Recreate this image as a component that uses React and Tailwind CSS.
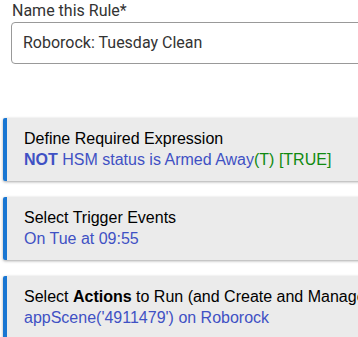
import React from 'react'

const Card = ({ title, children }) => (
  <div className="flex bg-[#ebebeb] shadow-[0_1px_3px_rgba(0,0,0,0.35)] rounded-l-[2px]">
    <div className="w-[4px] shrink-0 bg-[#1976d2] rounded-l-[2px]" />
    <div className="pl-[17px] pt-[10px] pb-[11px] text-[16px] leading-[21px] font-['Liberation_Sans',Arial,sans-serif] whitespace-nowrap">
      <div className="text-black">{title}</div>
      <div className="text-[#3f51c4]">{children}</div>
    </div>
  </div>
)

export default function App() {
  return (
    <div className="w-[358px] h-[337px] overflow-hidden bg-white">
      <div className="w-[440px]">
        <div className="pl-[11px] pt-[1px]">
          <div className="pl-[1px] text-[16px] leading-[20px] text-[#333] font-['Roboto',sans-serif]">
            Name this Rule*
          </div>
          <div className="mt-[1px] h-[42px] flex items-center pl-[11px] border border-[#999] rounded-[4px] text-[16px] text-[#333] font-['Roboto',sans-serif]">
            Roborock: Tuesday Clean
          </div>
        </div>

        <div className="pl-[3px] pt-[54px] flex flex-col gap-[16px]">
          <Card title="Define Required Expression">
            <span className="font-bold">NOT</span> HSM status is Armed Away
            <span className="text-[#108a10]">(T) [TRUE]</span>
          </Card>
          <Card title="Select Trigger Events">On Tue at 09:55</Card>
          <Card title={<>Select <span className="font-bold">Actions</span> to Run (and Create and Manage Local Variables)</>}>
            appScene('4911479') on Roborock
          </Card>
        </div>
      </div>
    </div>
  )
}
